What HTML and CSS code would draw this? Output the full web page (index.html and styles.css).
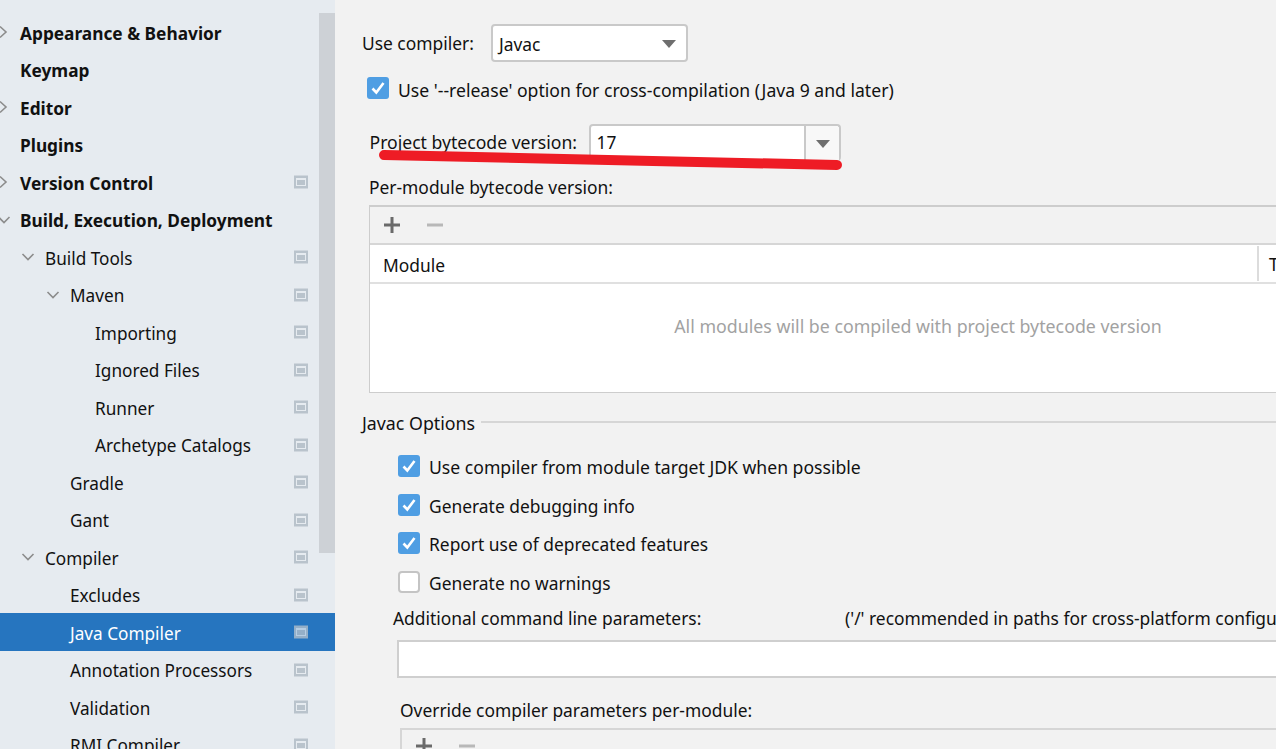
FILE: index.html
```html
<!DOCTYPE html>
<html lang="en">
<head>
<meta charset="utf-8">
<title>Java Compiler</title>
<link rel="stylesheet" href="styles.css">
</head>
<body>
<svg class="defs" width="0" height="0">
  <defs>
    <symbol id="pg" viewBox="0 0 14 14">
      <rect width="14" height="13" y="0.5" fill="#b9c3cc"/>
      <rect x="2" y="3" width="10" height="8" fill="#e6ebf0"/>
      <rect x="3" y="5" width="8" height="5" fill="#b9c3cc"/>
    </symbol>
    <symbol id="chk" viewBox="0 0 22 22">
      <rect width="22" height="22" rx="3" fill="#4f9ee3"/>
      <path d="M5.500 11.500l3.800 4L16.500 6" fill="none" stroke="#fff" stroke-width="2.600"/>
    </symbol>
    <symbol id="right" viewBox="0 0 14 14"><path d="M3 1.500l6 5.500-6 5.500" fill="none" stroke="#8c8c8c" stroke-width="1.600"/></symbol>
    <symbol id="down" viewBox="0 0 14 14"><path d="M1.500 4l5.500 5.500L12.500 4" fill="none" stroke="#8c8c8c" stroke-width="1.600"/></symbol>
    <symbol id="tri" viewBox="0 0 14 8"><path d="M0 0h14L7 8z" fill="#6e6e6e"/></symbol>
    <symbol id="plus" viewBox="0 0 16 16"><path d="M8 0v16M0 8h16" stroke="#6a6a6a" stroke-width="3"/></symbol>
    <symbol id="minus" viewBox="0 0 16 16"><path d="M0 8h16" stroke="#b8b8b8" stroke-width="3"/></symbol>
  </defs>
</svg>
<div class="app">
  <nav class="side">
    <div class="tree">
      <div class="row b"><svg class="tw l0"><use href="#right"/></svg><span>Appearance &amp; Behavior</span></div>
      <div class="row b"><i class="tw l0"></i><span>Keymap</span></div>
      <div class="row b"><svg class="tw l0"><use href="#right"/></svg><span>Editor</span></div>
      <div class="row b"><i class="tw l0"></i><span>Plugins</span></div>
      <div class="row b"><svg class="tw l0"><use href="#right"/></svg><span>Version Control</span><svg class="pg"><use href="#pg"/></svg></div>
      <div class="row b"><svg class="tw l0"><use href="#down"/></svg><span>Build, Execution, Deployment</span></div>
      <div class="row i1"><svg class="tw"><use href="#down"/></svg><span>Build Tools</span><svg class="pg"><use href="#pg"/></svg></div>
      <div class="row i2"><svg class="tw"><use href="#down"/></svg><span>Maven</span><svg class="pg"><use href="#pg"/></svg></div>
      <div class="row i3"><span>Importing</span><svg class="pg"><use href="#pg"/></svg></div>
      <div class="row i3"><span>Ignored Files</span><svg class="pg"><use href="#pg"/></svg></div>
      <div class="row i3"><span>Runner</span><svg class="pg"><use href="#pg"/></svg></div>
      <div class="row i3"><span>Archetype Catalogs</span><svg class="pg"><use href="#pg"/></svg></div>
      <div class="row i2b"><span>Gradle</span><svg class="pg"><use href="#pg"/></svg></div>
      <div class="row i2b"><span>Gant</span><svg class="pg"><use href="#pg"/></svg></div>
      <div class="row i1"><svg class="tw"><use href="#down"/></svg><span>Compiler</span><svg class="pg"><use href="#pg"/></svg></div>
      <div class="row i2b"><span>Excludes</span><svg class="pg"><use href="#pg"/></svg></div>
      <div class="row i2b sel"><span>Java Compiler</span><svg class="pg"><use href="#pg"/></svg></div>
      <div class="row i2b"><span>Annotation Processors</span><svg class="pg"><use href="#pg"/></svg></div>
      <div class="row i2b"><span>Validation</span><svg class="pg"><use href="#pg"/></svg></div>
      <div class="row i2b"><span>RMI Compiler</span><svg class="pg"><use href="#pg"/></svg></div>
    </div>
    <div class="thumb"></div>
  </nav>
  <main class="main">
    <div class="line compiler">
      <label class="lbl-compiler">Use compiler:</label>
      <div class="combo combo-a"><span>Javac</span><svg class="tri"><use href="#tri"/></svg></div>
    </div>
    <div class="line release">
      <svg class="cb"><use href="#chk"/></svg>
      <span>Use '--release' option for cross-compilation (Java 9 and later)</span>
    </div>
    <div class="line bytecode">
      <label class="lbl-bytecode">Project bytecode version:</label>
      <div class="combo combo-b"><span>17</span><div class="arrow"><svg class="tri"><use href="#tri"/></svg></div></div>
    </div>
    <div class="per">Per-module bytecode version:</div>
    <div class="table">
      <div class="tools"><svg class="plus"><use href="#plus"/></svg><svg class="minus"><use href="#minus"/></svg></div>
      <div class="thead"><span class="th1">Module</span><span class="th2">Target bytecode version</span></div>
      <div class="empty">All modules will be compiled with project bytecode version</div>
    </div>
    <div class="group"><span>Javac Options</span><div class="rule"></div></div>
    <div class="opts">
      <div class="opt wide"><svg class="cb"><use href="#chk"/></svg><span>Use compiler from module target JDK when possible</span></div>
      <div class="opt"><svg class="cb"><use href="#chk"/></svg><span>Generate debugging info</span></div>
      <div class="opt"><svg class="cb"><use href="#chk"/></svg><span>Report use of deprecated features</span></div>
      <div class="opt"><i class="cb off"></i><span>Generate no warnings</span></div>
    </div>
    <div class="addl"><span class="addl-l">Additional command line parameters:</span><span class="addl-r">('/' recommended in paths for cross-platform configurations)</span></div>
    <div class="field"></div>
    <div class="over">Override compiler parameters per-module:</div>
    <div class="table2">
      <div class="tools2"><svg class="plus"><use href="#plus"/></svg><svg class="minus"><use href="#minus"/></svg></div>
    </div>
  </main>
</div>
<svg class="mark" viewBox="0 0 1276 749"><path d="M384 155L837 165" stroke="#ee1c25" stroke-width="10" stroke-linecap="round"/></svg>
</body>
</html>
```
FILE: styles.css
```css
* { box-sizing: border-box; }
html, body { margin: 0; height: 749px; overflow: hidden; }
body { font-family: "Noto Sans", "Open Sans", sans-serif; font-size: 17.4px; color: #111; background: #f2f2f2; position: relative; }
.defs { position: absolute; }
.app { display: flex; height: 749px; overflow: hidden; }
.side { width: 335px; flex: none; background: #e6ebf0; height: 749px; position: relative; overflow: hidden; padding-top: 13.4px; font-size: 17.2px; }
.tree { display: flex; flex-direction: column; }
.row { height: 37.5px; flex: none; display: flex; align-items: center; position: relative; white-space: nowrap; }
.row > span { padding-top: 2px; }
.row .pg { position: absolute; left: 294px; top: 12px; width: 14px; height: 14px; }
.b span { font-weight: 700; font-size: 17.3px; }
.tw { width: 14px; height: 14px; flex: none; display: block; }
.l0 { margin-left: -3px; margin-right: 9px; }
.i1 { padding-left: 21px; }
.i1 .tw { margin-right: 10px; }
.i2 { padding-left: 46px; }
.i2 .tw { margin-right: 10px; }
.i2b { padding-left: 70px; }
.i3 { padding-left: 95px; }
.sel { background: #2675bf; color: #fff; }
.sel .pg { opacity: .75; }
.thumb { position: absolute; left: 319px; top: 13px; width: 16px; height: 540px; background: #cdd1d6; }
.main { flex: 1; min-width: 0; position: relative; overflow: hidden; }
.line { display: flex; align-items: center; white-space: nowrap; }
.compiler { margin-top: 24px; height: 38px; padding-left: 27px; }
.lbl-compiler { width: 129px; padding-bottom: 1px; }
.combo { background: #fff; border: 2px solid #c9c9c9; border-radius: 4px; display: flex; align-items: center; position: relative; flex: none; }
.combo-a { width: 197px; height: 38px; padding-left: 6px; }
.combo-a > span { padding-top: 2px; }
.combo-a .tri { position: absolute; right: 10px; top: 14px; width: 14px; height: 8px; }
.release { margin-top: 15px; height: 22px; padding-left: 32px; font-size: 17.6px; }
.cb { width: 22px; height: 22px; flex: none; display: block; }
.release span { margin-left: 9px; padding-top: 3px; }
.bytecode { margin-top: 25px; height: 37px; padding-left: 34.5px; }
.lbl-bytecode { width: 219px; padding-bottom: 2px; font-size: 17.6px; }
.combo-b { width: 252.5px; height: 37px; padding-left: 6px; border-bottom-width: 0; }
.combo-b > span { flex: 1; padding-bottom: 3px; }
.arrow { width: 35px; height: 100%; background: #f8f8f8; border-left: 2px solid #c9c9c9; display: flex; justify-content: center; padding-top: 14px; border-radius: 0 4px 0 0; }
.arrow .tri { width: 14px; height: 8px; }
.per { margin: 13px 0 0 34px; height: 31px; line-height: 26px; }
.table { margin-left: 34px; width: 1098px; height: 188px; border: 1px solid #cdcdcd; border-top-width: 2px; background: #fff; display: flex; flex-direction: column; }
.tools { height: 38px; background: #f2f2f2; border-bottom: 2px solid #d6d6d6; display: flex; align-items: center; padding-left: 14px; flex: none; }
.plus, .minus { width: 16px; height: 16px; display: block; flex: none; }
.minus { margin-left: 27px; }
.thead { height: 39px; flex: none; border-bottom: 2px solid #e0e0e0; display: flex; align-items: center; padding-left: 13px; white-space: nowrap; }
.th1 { width: 874px; flex: none; padding-top: 3px; }
.th2 { border-left: 2px solid #dcdcdc; height: 35px; line-height: 37px; padding-left: 10px; }
.empty { flex: 1; display: flex; align-items: center; justify-content: center; color: #a2a2a2; white-space: nowrap; padding-bottom: 25px; font-size: 17.8px; }
.group { margin: 17px 0 0 27px; display: flex; align-items: center; height: 26px; white-space: nowrap; }
.group span { width: 119px; flex: none; font-size: 17.8px; }
.rule { height: 2px; width: 900px; background: #d6d6d6; flex: none; margin-top: -2px; }
.opts { margin: 19px 0 0 63px; display: flex; flex-direction: column; gap: 16.67px; }
.opt { display: flex; align-items: center; height: 22px; white-space: nowrap; }
.opt span { margin-left: 9px; padding-top: 2px; }
.wide { font-size: 17.6px; }
.off { background: #fff; border: 2px solid #c4c4c4; border-radius: 4px; }
.addl { margin: 12px 0 0 58px; height: 26px; display: flex; align-items: center; white-space: nowrap; }
.addl-l { width: 452px; flex: none; }
.field { margin: 9px 0 0 62px; width: 950px; height: 38px; background: #fff; border: 2px solid #cfcfcf; }
.over { margin: 19px 0 0 65px; height: 26px; line-height: 26px; white-space: nowrap; }
.table2 { margin: 5px 0 0 65px; width: 930px; height: 40px; border: 2px solid #d6d6d6; border-right: 0; border-bottom: 0; }
.tools2 { display: flex; padding: 8px 0 0 14px; }
.mark { position: absolute; left: 0; top: 0; width: 1276px; height: 749px; pointer-events: none; }
```
